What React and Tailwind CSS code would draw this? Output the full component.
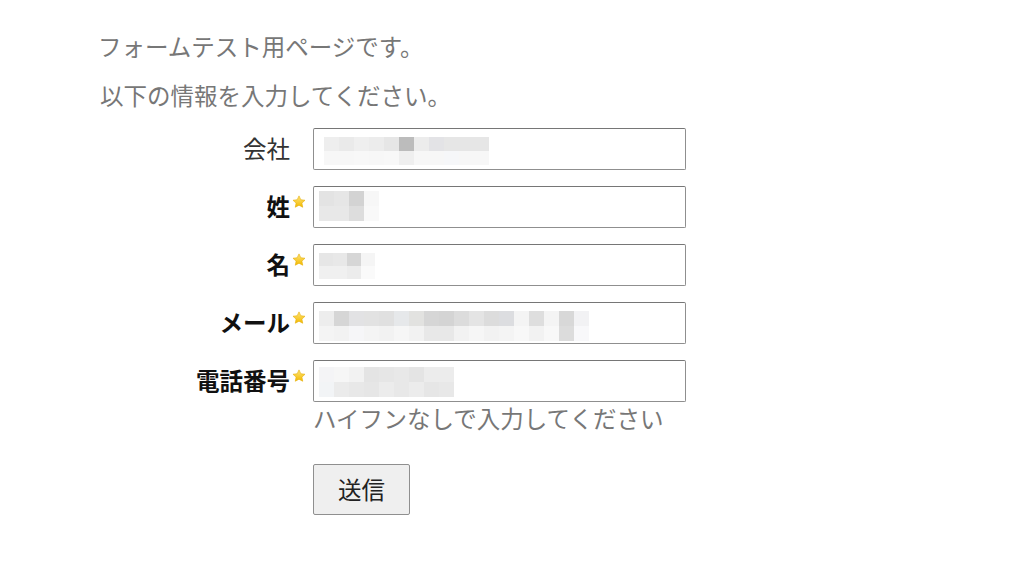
import React from "react";

const font = { fontFamily: '"Meiryo", "Noto Sans CJK JP", "Noto Sans", sans-serif' };

// Blurred field contents: two stripes of gray cells per field
const fields = [
  {
    label: "会社",
    required: false,
    pad: "pt-[8px] pl-[10px]",
    cell: "w-[15px] h-[14px]",
    rows: [
      ["#eeeeee", "#eaeaea", "#efefef", "#ececec", "#e6e6e6", "#bcbcbc", "#ececec", "#e3e3e6", "#e6e6e6", "#e6e6e6", "#e6e6e6"],
      ["#f7f7f7", "#f7f7f7", "#f8f8f8", "#f7f7f7", "#f8f8f8", "#efefef", "#f7f7f7", "#f7f7f7", "#f6f7f9", "#f7f7f7", "#f7f7f7"],
    ],
  },
  {
    label: "姓",
    required: true,
    pad: "pt-[4px] pl-[5px]",
    cell: "w-[15px] h-[15px]",
    rows: [
      ["#e3e3e3", "#e6e6e6", "#d3d3d3", "#f7f7f7"],
      ["#e8e8e8", "#e8e8e8", "#dddddd", "#f9f9f9"],
    ],
  },
  {
    label: "名",
    required: true,
    pad: "pt-[8px] pl-[5px]",
    cell: "w-[14px] h-[13px]",
    rows: [
      ["#e6e6e6", "#e8e8e8", "#d6d6d6", "#f5f5f5"],
      ["#f0f0f0", "#f0f0f0", "#ececec", "#fafafa"],
    ],
  },
  {
    label: "メール",
    required: true,
    pad: "pt-[8px] pl-[5px]",
    cell: "w-[15px] h-[15px]",
    rows: [
      ["#ededed", "#d6d6d6", "#e2e2e4", "#e2e2e2", "#e0e0e0", "#e6e8ea", "#e2e2e0", "#d6d6d6", "#d4d4d4", "#dcdcdc", "#e4e4e4", "#dcdcdc", "#dcdde0", "#f4f4f4", "#dedede", "#f4f4f4", "#d8d8d8", "#f2f2f4"],
      ["#f4f4f4", "#f2f2f2", "#f6f6f8", "#f4f4f4", "#f2f2f2", "#f6f6f6", "#f2f2f2", "#e8e8e8", "#e8e8e8", "#f2f2f2", "#f6f6f6", "#f2f2f2", "#f4f4f4", "#f8f8f8", "#f2f2f2", "#f8f8f8", "#dcdcdc", "#f8f8fa"],
    ],
  },
  {
    label: "電話番号",
    required: true,
    pad: "pt-[6px] pl-[5px]",
    cell: "w-[15px] h-[15px]",
    rows: [
      ["#f4f4f6", "#f6f6f6", "#f2f2f2", "#e4e4e4", "#e6e6e6", "#e8e8e8", "#e4e4e4", "#ececec", "#ececec"],
      ["#f2f4f6", "#ebebeb", "#e8e8e8", "#e6e6e6", "#ececec", "#e8e8e8", "#ececec", "#e6e6e6", "#e8e8e8"],
    ],
  },
];

function Star() {
  return (
    <svg width="14" height="14" viewBox="0 0 24 24">
      <defs>
        <linearGradient id="starg" x1="0" y1="0" x2="0" y2="1">
          <stop offset="0" stopColor="#ffe57a" />
          <stop offset="1" stopColor="#f2b900" />
        </linearGradient>
      </defs>
      <path
        d="M12 1.5l3.1 6.6 7.2.9-5.3 4.9 1.4 7.1L12 17.5l-6.4 3.5 1.4-7.1L1.7 9l7.2-.9z"
        fill="url(#starg)"
        stroke="#e6ad00"
        strokeWidth="1"
        strokeLinejoin="round"
      />
    </svg>
  );
}

function Field({ f }) {
  return (
    <div className={`w-[373px] h-[42px] bg-white border border-[#8f8f8f] border-t-[#767676] rounded-[2px] ${f.pad}`}>
      {f.rows.map((row, i) => (
        <div key={i} className="flex">
          {row.map((c, j) => (
            <div key={j} className={f.cell} style={{ backgroundColor: c }} />
          ))}
        </div>
      ))}
    </div>
  );
}

export default function App() {
  return (
    <div className="min-h-[561px] bg-white pt-[22px]" style={font}>
      <p className="pl-[98px] text-[23.5px] leading-[49px] text-[#777]">フォームテスト用ページです。</p>
      <p className="pl-[100px] text-[23.5px] leading-[49px] text-[#777]">以下の情報を入力してください。</p>

      <div className="mt-[8px] grid grid-cols-[290px_23px_373px] gap-y-4">
        {fields.map((f, i) => (
          <React.Fragment key={f.label}>
            <div
              className={`self-start h-[42px] flex items-center justify-end text-[23.5px] ${
                f.required ? "font-bold text-[#111]" : "text-[#333]"
              }`}
            >
              {f.label}
            </div>
            <div className="self-start pt-[9px] pl-[2px]">{f.required && <Star />}</div>
            <div className="flex flex-col items-start">
              <Field f={f} />
              {i === fields.length - 1 && (
                <>
                  <p className="text-[23.5px] leading-[33px] text-[#777]">ハイフンなしで入力してください</p>
                  <button
                    type="button"
                    className="mt-[29px] w-[97px] h-[51px] bg-[#efefef] border border-[#8f8f8f] rounded-[2px] text-[23.5px] text-[#222]"
                  >
                    送信
                  </button>
                </>
              )}
            </div>
          </React.Fragment>
        ))}
      </div>
    </div>
  );
}
